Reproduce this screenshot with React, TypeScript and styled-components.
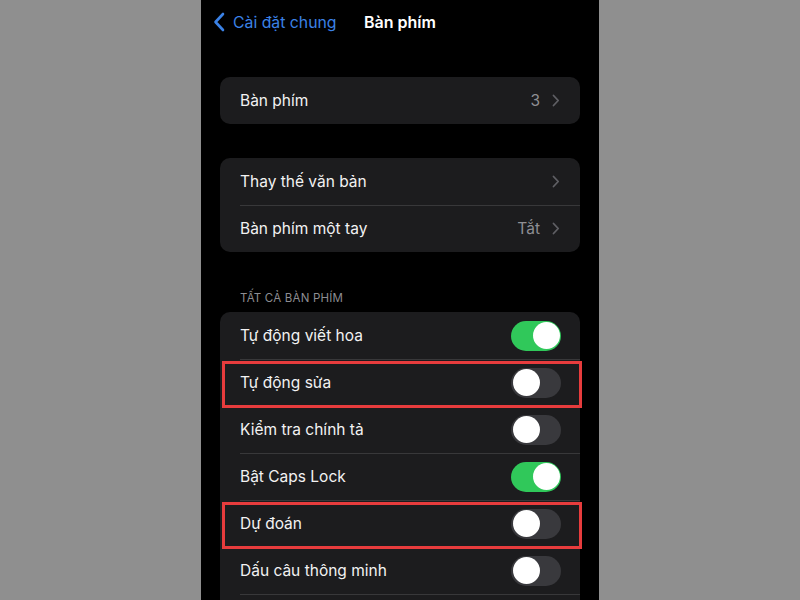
import React from "react";
import styled, { createGlobalStyle } from "styled-components";

const Global = createGlobalStyle`
  html, body { margin: 0; padding: 0; }
  body {
    background: #8f8f8f;
    font-family: Inter, "Noto Sans", "Liberation Sans", sans-serif;
    -webkit-font-smoothing: antialiased;
  }
`;

const Page = styled.div`
  width: 800px;
  height: 600px;
  display: flex;
  justify-content: center;
  overflow: hidden;
`;

const Screen = styled.div`
  width: 398px;
  height: 600px;
  background: #000;
  padding: 0 19px;
  box-sizing: border-box;
  display: flex;
  flex-direction: column;
  overflow: hidden;
  & > * {
    flex-shrink: 0;
  }
`;

const NavBar = styled.div`
  position: relative;
  height: 44px;
  display: flex;
  align-items: center;
  margin: 0 -19px;
  padding-left: 12px;
`;

const Back = styled.div`
  display: flex;
  align-items: center;
  gap: 8px;
  color: #3b82e6;
  font-size: 15.8px;
`;

const Title = styled.div`
  position: absolute;
  left: 0;
  right: 0;
  text-align: center;
  color: #fff;
  font-size: 16px;
  font-weight: 600;
  pointer-events: none;
`;

const Card = styled.div<{ $top: number }>`
  margin-top: ${(p) => p.$top}px;
  background: #1c1c1e;
  border-radius: 10px;
  display: flex;
  flex-direction: column;
`;

const Row = styled.div`
  position: relative;
  box-sizing: border-box;
  height: 47px;
  display: flex;
  align-items: center;
  padding: 0 20px;
  flex-shrink: 0;
  & + &::before {
    content: "";
    position: absolute;
    top: 0;
    left: 20px;
    right: 0;
    border-top: 0.8px solid #38383a;
  }
`;

const ListTail = styled.div`
  height: 20px;
  margin-left: 20px;
  border-top: 0.8px solid #38383a;
`;

const RowInner = styled.div`
  display: flex;
  align-items: center;
  flex: 1;
  height: 100%;
`;

const Label = styled.span`
  flex: 1;
  color: #f2f2f2;
  font-size: 15.5px;
`;

const Value = styled.span`
  color: #8e8e93;
  font-size: 15.5px;
  margin-right: 12px;
`;

const SectionHeader = styled.div`
  margin-top: 38px;
  padding-left: 20px;
  color: #8d8d92;
  font-size: 11.5px;
  letter-spacing: 0.2px;
  height: 17px;
  line-height: 17px;
`;

const Track = styled.div<{ $on: boolean }>`
  position: relative;
  width: 50px;
  height: 30px;
  border-radius: 15px;
  background: ${(p) => (p.$on ? "#30c85a" : "#39393d")};
  margin-right: -1px;
`;

const Knob = styled.div<{ $on: boolean }>`
  position: absolute;
  top: 1.5px;
  left: ${(p) => (p.$on ? "21.5px" : "1.5px")};
  width: 27px;
  height: 27px;
  border-radius: 50%;
  background: #fff;
`;

const Highlight = styled.div`
  position: absolute;
  z-index: 2;
  left: 2px;
  right: -2px;
  top: 2px;
  bottom: -2px;
  border: 3px solid #e73c3d;
  pointer-events: none;
`;

const Chevron = () => (
  <svg width="8" height="13" viewBox="0 0 8 13">
    <path d="M1.5 1.5 L6.2 6.5 L1.5 11.5" fill="none" stroke="#5f5f64" strokeWidth="1.8" strokeLinecap="round" strokeLinejoin="round" />
  </svg>
);

const BackChevron = () => (
  <svg width="12" height="20" viewBox="0 0 12 20">
    <path d="M10 2 L2.5 10 L10 18" fill="none" stroke="#3b82e6" strokeWidth="2.6" strokeLinecap="round" strokeLinejoin="round" />
  </svg>
);

const Toggle = ({ on }: { on: boolean }) => (
  <Track $on={on}>
    <Knob $on={on} />
  </Track>
);

const toggles: { label: string; on: boolean; marked?: boolean }[] = [
  { label: "Tự động viết hoa", on: true },
  { label: "Tự động sửa", on: false, marked: true },
  { label: "Kiểm tra chính tả", on: false },
  { label: "Bật Caps Lock", on: true },
  { label: "Dự đoán", on: false, marked: true },
  { label: "Dấu câu thông minh", on: false },
];

export default function App() {
  return (
    <>
      <Global />
      <Page>
        <Screen>
          <NavBar>
            <Back>
              <BackChevron />
              <span>Cài đặt chung</span>
            </Back>
            <Title>Bàn phím</Title>
          </NavBar>

          <Card $top={33}>
            <Row>
              <Label>Bàn phím</Label>
              <Value>3</Value>
              <Chevron />
            </Row>
          </Card>

          <Card $top={34}>
            <Row>
              <Label>Thay thế văn bản</Label>
              <Chevron />
            </Row>
            <Row>
              <Label>Bàn phím một tay</Label>
              <Value>Tắt</Value>
              <Chevron />
            </Row>
          </Card>

          <SectionHeader>TẤT CẢ BÀN PHÍM</SectionHeader>

          <Card $top={5}>
            {toggles.map((t) => (
              <Row key={t.label}>
                <RowInner>
                  <Label>{t.label}</Label>
                  <Toggle on={t.on} />
                </RowInner>
                {t.marked && <Highlight />}
              </Row>
            ))}
            <ListTail />
          </Card>
        </Screen>
      </Page>
    </>
  );
}
